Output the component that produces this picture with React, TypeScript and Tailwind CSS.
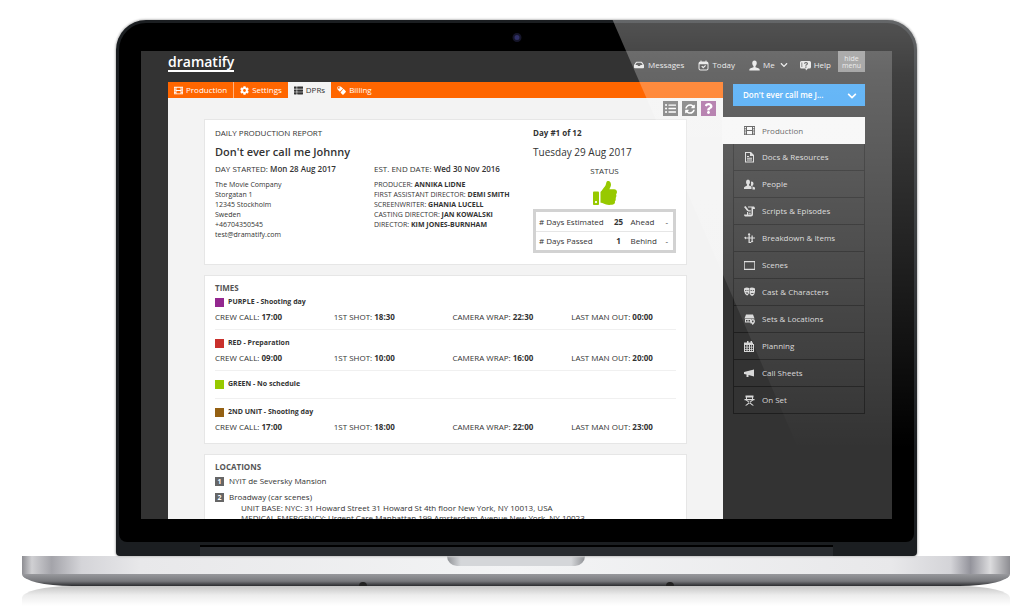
import type { ReactNode } from "react";
import {
  FaChevronDown,
  FaCog,
  FaInbox,
  FaListUl,
  FaQuestion,
  FaSyncAlt,
  FaThList,
  FaThumbsUp,
} from "react-icons/fa";

const Icon = ({ children, className }: { children: ReactNode; className?: string }) => (
  <svg viewBox="0 0 22 22" fill="currentColor" className={className ?? "size-[11px]"} aria-hidden="true">
    {children}
  </svg>
);

const FilmIcon = ({ className }: { className?: string }) => (
  <Icon className={className}>
    <path
      fillRule="evenodd"
      d="M0 2h22v18H0zM1.500 4v2.500h2.500V4zm0 4.500V11h2.500V8.500zm0 4.500v2.300h2.500V13zm0 4v1.500h2.500V17zM18 4v2.500h2.500V4zm0 4.500V11h2.500V8.500zm0 4.500v2.300h2.500V13zm0 4v1.500h2.500V17zM6 4v6h10V4zm0 8v6.500h10V12z"
    />
  </Icon>
);

const TagsIcon = ({ className }: { className?: string }) => (
  <Icon className={className}>
    <path fillRule="evenodd" d="M1 3q0-2 2-2h6l6 5-8 8-5-5q-1-1-1-2zm3.500-.500a2 2 0 1 0 .01 0z" />
    <path d="m16 7 5 5.500q1.500 1.500 0 3L16 20.500q-1.500 1.200-3 0L8.500 16z" />
  </Icon>
);

const CalendarIcon = () => (
  <Icon>
    <path
      fillRule="evenodd"
      d="M4 3h2V0h3v3h4V0h3v3h2v3h2v16H0V6h0V3zM2 8v3.500h3V8zm5 0v3.500h3V8zm5 0v3.500h2.500V8zm4 0v3.500h2V8zM2 13v3h3v-3zm5 0v3h3v-3zm5 0v3h2.500v-3zm4 0v3h2v-3zM2 17.500V20h3v-2.500zm5 0V20h3v-2.500zm5 0V20h2.500v-2.500zm4 0V20h2v-2.500z"
    />
  </Icon>
);

const TodayIcon = () => (
  <Icon>
    <path fillRule="evenodd" d="M5 1h2v2h8V1h2v2q4 0 4 4v10q0 4-4 4H5q-4 0-4-4V7q0-4 4-4zM3 8.500V17q0 2 2 2h12q2 0 2-2V8.500z" />
    <path d="m6.500 13 2-1.500 2 2 4-3.500 1.500 1.500-5.500 5.500z" />
  </Icon>
);

const PersonIcon = () => (
  <Icon>
    <path d="M11 1c3 0 4.500 2.200 4.500 5s-1 4.500-2.500 6v2.500l7 2.500q1.500.8 1.500 4h-21q0-3.200 1.500-4l7-2.500V12C7.500 10.500 6.500 8.800 6.500 6S8 1 11 1z" />
  </Icon>
);

const HelpIcon = () => (
  <Icon>
    <path
      fillRule="evenodd"
      d="M3 2h16q3 0 3 3v9q0 3-3 3h-3l-4 4-1-4H3q-3 0-3-3V5q0-3 3-3zm5 5.500h2.500q0-1.500 1.500-1.500t1.500 1.300-1.500 1.700-1.500 2.500H13q0-1 1.400-1.900T16 7.300q0-3.300-4-3.300T8 7.500zm2.500 5.500v2.300H13V13zM3 5v9h1.500V5z"
    />
  </Icon>
);

const menu = [
  {
    label: "Docs & Resources",
    icon: (
      <Icon>
        <path fillRule="evenodd" d="M2 0h12l6 6v15H2zM4 2v17h14V8h-6V2z" />
        <path d="M6 8h4v2H6zm0 3.500h10v2H6zm0 3.500h10v2H6z" />
      </Icon>
    ),
  },
  {
    label: "People",
    icon: (
      <Icon>
        <path d="M8 1q4 0 4 5 0 3-2 5v2l5 2v5H0v-3q0-1 6-4v-2Q4 9 4 6q0-5 4-5z" />
        <path d="M15 5q4 0 4 4 0 3-2 4.500V15l5 2v4h-5v-6l-3.500-2q1-2 .500-7.500z" />
      </Icon>
    ),
  },
  {
    label: "Scripts & Episodes",
    icon: (
      <Icon>
        <path fillRule="evenodd" d="M8 1h12q2 1 2 5h-4v11q0 4-4 4H2q-2-1-2-4h6v-5h2v5h7V3H8z" />
        <path d="M9 8h4.500v1.500H9zm0 3h4.500v1.500H9zm0 3h4.500v1.500H9zM0 2l3-2 6 8v3L6 9.500z" />
      </Icon>
    ),
  },
  {
    label: "Breakdown & Items",
    icon: (
      <Icon>
        <path d="M0 9.500 4 7v2h5V1h2.500v8H15V5h2.500v4H22v2h-4.500v6H15v-6h-3.500v7h3v2h-3L9 20v-9H4v2z" />
        <path d="m10 0 3 4H7.500zM16 19l-3-3h6z" />
      </Icon>
    ),
  },
  {
    label: "Scenes",
    icon: (
      <Icon>
        <path fillRule="evenodd" d="M0 2h22v18H0zm1.500 2.500v13h19v-13z" />
      </Icon>
    ),
  },
  {
    label: "Cast & Characters",
    icon: (
      <Icon>
        <path fillRule="evenodd" d="M0 3q5-3 10-1v10q-2 5-4 5-5-3-6-9zm2 3.500V8h3V6.500zm4.500 0V8H9V6.500zM3 11q1 3 5 2v-2z" />
        <path fillRule="evenodd" d="M11 2q6-2 11 1v6q-1 8-6 9-3-1-5-5zm2 4.500V8h3V6.500zm4.500 0V8H20V6.500zM13 14h7q-4-4-7 0z" />
      </Icon>
    ),
  },
  {
    label: "Sets & Locations",
    icon: (
      <Icon>
        <path d="M4 1h14l3 8H1z" />
        <path fillRule="evenodd" d="M2 10h12v9H2zm2 2v3h3v-3zm5 0v3h3v-3zM2 17v2h11v-2z" />
        <path fillRule="evenodd" d="M17.500 10q4.500 0 4.500 4.500 0 3-4.500 7.500-4.500-4.500-4.500-7.500 0-4.500 4.500-4.500zm0 3a1.700 1.700 0 1 0 .01 0z" />
      </Icon>
    ),
  },
  { label: "Planning", icon: <CalendarIcon /> },
  {
    label: "Call Sheets",
    icon: (
      <Icon>
        <path d="M0 8 20 3v14L9 14v4H5v-5l-5-1z" />
      </Icon>
    ),
  },
  {
    label: "On Set",
    icon: (
      <Icon>
        <path d="M3 1h16v4H3zM1 8h20v2.500H1zM4 4h2v5H4zm12 0h2v5h-2z" />
        <path d="M3 10h3l14 11h-3.500zM19 10h-3L2 21h3.500z" />
      </Icon>
    ),
  },
];

const crew = [
  ["PRODUCER", "ANNIKA LIDNE"],
  ["FIRST ASSISTANT DIRECTOR", "DEMI SMITH"],
  ["SCREENWRITER", "GHANIA LUCELL"],
  ["CASTING DIRECTOR", "JAN KOWALSKI"],
  ["DIRECTOR", "KIM JONES-BURNHAM"],
];

const units = [
  { name: "PURPLE - Shooting day", color: "bg-[#93278f]", times: ["17:00", "18:30", "22:30", "00:00"] },
  { name: "RED - Preparation", color: "bg-[#c9302c]", times: ["09:00", "10:00", "16:00", "20:00"] },
  { name: "GREEN - No schedule", color: "bg-[#97c900]", times: [] },
  { name: "2ND UNIT - Shooting day", color: "bg-[#946012]", times: ["17:00", "18:00", "22:00", "23:00"] },
];

const timeLabels = ["CREW CALL", "1ST SHOT", "CAMERA WRAP", "LAST MAN OUT"];

const Card = ({ children }: { children: ReactNode }) => (
  <section className="border border-[#e6e6e6] bg-white px-[10px] pt-1.5">{children}</section>
);

const TopBar = () => (
  <header className="flex h-[31px] items-start justify-between">
    <a href="#" className="mt-[3px] border-b-2 border-white text-[14px] leading-[16px] font-semibold text-white">
      dramatify
    </a>
    <nav className="flex items-start text-[8px] leading-[12px] text-[#e4e4e4]">
      <a href="#" className="mt-2 mr-[14px] flex items-center gap-1">
        <FaInbox className="size-[10px]" />
        Messages
      </a>
      <a href="#" className="mt-2 mr-[14px] flex items-center gap-[3px]">
        <TodayIcon />
        Today
      </a>
      <a href="#" className="mt-2 mr-3 flex items-center gap-[3px]">
        <PersonIcon />
        Me
        <FaChevronDown className="ml-0.5 size-2" />
      </a>
      <a href="#" className="mt-2 mr-[7px] flex items-center gap-[3px]">
        <HelpIcon />
        Help
      </a>
      <button className="h-[21px] w-[27px] bg-[#8b8b8b] text-center text-[7px] leading-[7px]">hide menu</button>
    </nav>
  </header>
);

const Tabs = () => (
  <nav className="flex h-4 bg-[#ff6600] text-[8px] text-white">
    <a href="#" className="flex items-center gap-[3px] border-r border-[#ffb380] px-1.5">
      <FilmIcon className="size-[9px]" />
      Production
    </a>
    <a href="#" className="flex items-center gap-[3px] px-1.5">
      <FaCog className="size-[9px]" />
      Settings
    </a>
    <a href="#" className="flex items-center gap-[3px] bg-[#f3f3f3] px-1.5 text-[#333]">
      <FaThList className="size-[9px]" />
      DPRs
    </a>
    <a href="#" className="flex items-center gap-[3px] px-1.5">
      <TagsIcon className="size-[9px]" />
      Billing
    </a>
  </nav>
);

const ReportCard = () => (
  <Card>
    <div className="grid grid-cols-3 gap-4 pt-px pb-[11px]">
      <div className="col-span-2">
        <p className="text-[8px] leading-[12px]">DAILY PRODUCTION REPORT</p>
        <h1 className="mt-[5px] text-[11px] leading-[16px] font-semibold">Don't ever call me Johnny</h1>
        <div className="mt-[3px] grid grid-cols-2 gap-4 text-[7px] leading-[10px]">
          <div>
            <p className="mb-[5px] text-[8px] leading-[12px] whitespace-nowrap">
              DAY STARTED: <span className="font-semibold">Mon 28 Aug 2017</span>
            </p>
            <address className="not-italic">
              The Movie Company
              <br />
              Storgatan 1
              <br />
              12345 Stockholm
              <br />
              Sweden
              <br />
              +46704350545
              <br />
              test@dramatify.com
            </address>
          </div>
          <div>
            <p className="mb-[5px] text-[8px] leading-[12px] whitespace-nowrap">
              EST. END DATE: <span className="font-semibold">Wed 30 Nov 2016</span>
            </p>
            {crew.map(([role, name]) => (
              <p key={role} className="whitespace-nowrap">
                {role}: <b>{name}</b>
              </p>
            ))}
          </div>
        </div>
      </div>
      <div>
        <p className="text-[8px] leading-[12px] font-bold">Day #1 of 12</p>
        <p className="mt-[5px] text-[10px] leading-[16px]">Tuesday 29 Aug 2017</p>
        <p className="mt-[5px] text-center text-[8px] leading-[12px]">STATUS</p>
        <FaThumbsUp className="mx-auto mt-1 size-6 text-[#97c900]" />
        <table className="mt-1 w-full table-fixed border-[3px] border-[#d2d2d2] text-[8px] leading-[12px] whitespace-nowrap">
          <tbody>
            <tr className="h-[21px] border-b border-[#e6e6e6]">
              <td className="w-[76px] pl-[3px]"># Days Estimated</td>
              <td className="w-4 text-center font-bold">25</td>
              <td className="pl-1">Ahead</td>
              <td className="w-[9px]">-</td>
            </tr>
            <tr className="h-5">
              <td className="pl-[3px]"># Days Passed</td>
              <td className="text-center font-bold">1</td>
              <td className="pl-1">Behind</td>
              <td>-</td>
            </tr>
          </tbody>
        </table>
      </div>
    </div>
  </Card>
);

const TimesCard = () => (
  <Card>
    <h2 className="text-[8px] leading-[12px] font-bold text-[#555]">TIMES</h2>
    <ul className="pb-1 text-[8px] leading-[12px]">
      {units.map((unit) => (
        <li
          key={unit.name}
          className="min-h-7 border-b border-[#f0f0f0] pt-[7px] pb-1.5 first:pt-0.5 last:border-b-0"
        >
          <h3 className="flex items-center gap-1 text-[7px] font-bold">
            <span className={`size-[9px] ${unit.color}`} />
            {unit.name}
          </h3>
          {unit.times.length > 0 && (
            <div className="mt-[3px] grid grid-cols-4 gap-[14px]">
              {unit.times.map((time, i) => (
                <p key={timeLabels[i]} className="whitespace-nowrap">
                  {timeLabels[i]}: <b>{time}</b>
                </p>
              ))}
            </div>
          )}
        </li>
      ))}
    </ul>
  </Card>
);

const LocationsCard = () => (
  <Card>
    <h2 className="text-[8px] leading-[12px] font-bold text-[#555]">LOCATIONS</h2>
    <ol className="text-[8px] leading-[12px] whitespace-nowrap">
      <li className="mt-0.5 flex items-center gap-[5px]">
        <span className="size-[9px] bg-[#666] text-center text-[7px] leading-[9px] font-bold text-white">1</span>
        NYIT de Seversky Mansion
      </li>
      <li className="mt-1 flex items-center gap-[5px]">
        <span className="size-[9px] bg-[#666] text-center text-[7px] leading-[9px] font-bold text-white">2</span>
        Broadway (car scenes)
      </li>
    </ol>
    <div className="pl-[26px] text-[8px] leading-[10px] whitespace-nowrap">
      <p>UNIT BASE: NYC: 31 Howard Street 31 Howard St 4th floor New York, NY 10013, USA</p>
      <p>MEDICAL EMERGENCY: Urgent Care Manhattan 199 Amsterdam Avenue New York, NY 10023</p>
    </div>
  </Card>
);

const Sidebar = () => (
  <aside className="w-[132px] shrink-0 pt-0.5">
    <div className="relative">
      <select
        aria-label="Project"
        className="block h-[22px] w-full appearance-none bg-[#37a0f4] pl-[10px] text-[8px] font-semibold text-white"
      >
        <option>Don't ever call me J...</option>
      </select>
      <FaChevronDown className="pointer-events-none absolute top-[7px] right-2 size-[10px] text-white" />
    </div>
    <nav className="mt-[11px] text-[8px] text-[#d8d8d8]">
      <a href="#" className="-ml-[11px] flex h-[27px] items-center gap-[7px] bg-[#f6f6f6] pl-[22px] text-[#444]">
        <FilmIcon />
        Production
      </a>
      {menu.map((item) => (
        <a
          key={item.label}
          href="#"
          className="flex h-[27px] items-center gap-[7px] border-x border-b border-[#1e1e1e] pl-[10px]"
        >
          {item.icon}
          {item.label}
        </a>
      ))}
    </nav>
  </aside>
);

const App = () => {
  return (
    <div className="overflow-hidden bg-white pt-5 font-['Open_Sans',sans-serif] text-[#333]">
      <div className="relative mr-[107px] ml-[116px] overflow-hidden rounded-t-[30px] rounded-b-[4px] bg-[#1b1e21] px-[3px] pt-[3px] shadow-[0_0_2px_1px_#c4c4c4]">
        <div className="relative rounded-t-[27px] rounded-b-[8px] bg-black px-[22px] pt-7 pb-[23px]">
          <span className="absolute top-[10px] left-1/2 size-[9px] -translate-x-1/2 rounded-full border-2 border-[#15152a] bg-[#2f2f66]" />
          <div className="aspect-[751/468] overflow-hidden bg-[#333] px-[27px]">
            <TopBar />
            <div className="flex gap-[10px]">
              <main className="min-w-0 flex-1 bg-[#f3f3f3]">
                <Tabs />
                <div className="flex justify-end gap-1 pt-[3px] pr-[7px] text-white">
                  <button aria-label="List" className="flex size-[15px] items-center justify-center bg-[#707070]">
                    <FaListUl className="size-[11px]" />
                  </button>
                  <button aria-label="Refresh" className="flex size-[15px] items-center justify-center bg-[#707070]">
                    <FaSyncAlt className="size-[10px]" />
                  </button>
                  <button aria-label="Help" className="flex size-[15px] items-center justify-center bg-[#a3609b]">
                    <FaQuestion className="size-[11px]" />
                  </button>
                </div>
                <div className="space-y-[10px] px-9 pt-[3px]">
                  <ReportCard />
                  <TimesCard />
                  <LocationsCard />
                </div>
              </main>
              <Sidebar />
            </div>
          </div>
        </div>
        <div className="px-[81px] pt-[3px]">
          <div className="h-[11px] border-t-2 border-black bg-[#292c30]" />
        </div>
        {/* light falling across the right side of the glass */}
        <div className="pointer-events-none absolute inset-0 bg-[linear-gradient(to_bottom,rgba(255,255,255,0.32),rgba(255,255,255,0.25)_10%,rgba(255,255,255,0.12)_46%,rgba(255,255,255,0)_80%)] [clip-path:polygon(62%_0,100%_0,100%_100%,91%_100%)]" />
      </div>

      <div className="mr-[14px] ml-[22px]">
        <div className="h-[18px] bg-[linear-gradient(to_right,#8d8d92,#d0d0d3_1%,#a4a4aa_3%,#d4d4d8_6%,#e8e8ea_12%,#f3f4f5_50%,#e8e8ea_88%,#d4d4d8_94%,#94949c_96%,#dcdcde_98%,#8d8d92)]">
          <div className="mx-auto h-[10px] w-[138px] rounded-b-[10px] bg-[linear-gradient(to_right,#8f9195,#d4d6d9_10%,#d4d6d9_90%,#8f9195)]" />
        </div>
        <div className="flex h-3 items-end justify-center gap-[299px] bg-[linear-gradient(to_bottom,#98999d,#77787c_60%,#2b2c2f)] [border-radius:0_0_50px_50px/0_0_12px_12px]">
          <span className="h-1 w-2 rounded-t-full bg-[#222]" />
          <span className="h-1 w-2 rounded-t-full bg-[#222]" />
        </div>
        <div className="h-5 bg-[linear-gradient(to_bottom,#c4c4c4,#ececec_45%,#ffffff)] [border-radius:50px_50px_0_0/12px_12px_0_0]" />
      </div>
    </div>
  );
};

export default App;
